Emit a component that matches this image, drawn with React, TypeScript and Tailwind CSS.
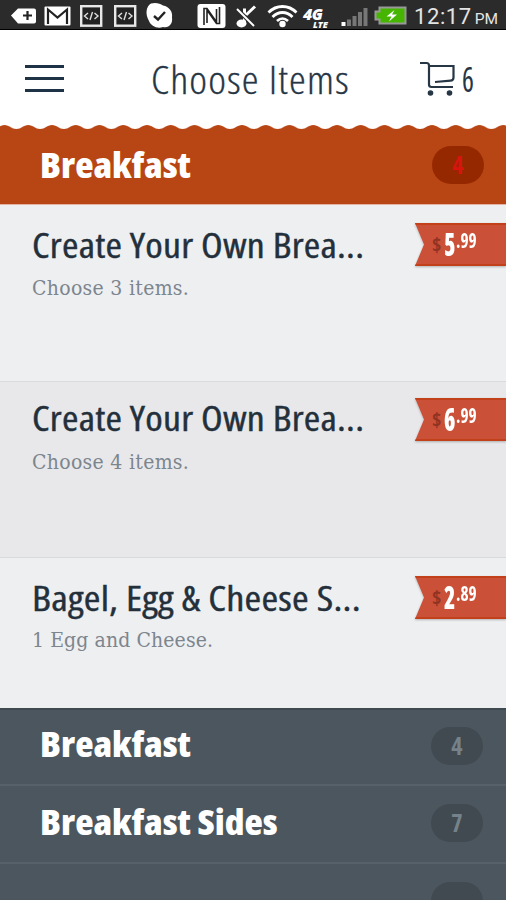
import { clsx } from 'clsx';

type Item = {
  title: string;
  note: string;
  dollars: string;
  cents: string;
  row: string;
  tag: string;
  titleStyle: string;
  noteStyle: string;
};

const items: Item[] = [
  {
    title: 'Create Your Own Brea...',
    note: 'Choose 3 items.',
    dollars: '5',
    cents: '.99',
    row: 'h-[176px] bg-[#eeeff1] pt-[22px]',
    tag: 'mt-[-4px]',
    titleStyle: 'scale-x-[1.137]',
    noteStyle: 'mt-[16px] tracking-[0.300px]',
  },
  {
    title: 'Create Your Own Brea...',
    note: 'Choose 4 items.',
    dollars: '6',
    cents: '.99',
    row: 'h-[176px] bg-[#e8e8ea] pt-[18px] border-t border-[#d9dadc]',
    tag: 'mt-[-2px]',
    titleStyle: 'scale-x-[1.137]',
    noteStyle: 'mt-[17px] tracking-[0.300px]',
  },
  {
    title: 'Bagel, Egg & Cheese S...',
    note: '1 Egg and Cheese.',
    dollars: '2',
    cents: '.89',
    row: 'h-[151px] bg-[#eeeff1] pt-[22px] border-t border-[#d9dadc]',
    tag: 'mt-[-4px]',
    titleStyle: 'scale-x-[1.150]',
    noteStyle: 'mt-[15px] tracking-[0.100px]',
  },
];

function StatusBar() {
  return (
    <div className="flex h-[30px] shrink-0 items-center bg-[#2b2b2b] border-b border-black">
      <svg width="506" height="30" viewBox="0 0 506 30" fill="#fff">
        {/* back tag */}
        <path d="M11 15.5 18 8.5h16a2 2 0 0 1 2 2v11a2 2 0 0 1-2 2H18z" />
        <path d="M27.5 11v9M23 15.5h9" stroke="#222" strokeWidth="2.2" />
        {/* mail */}
        <rect x="44.500" y="6.500" width="26" height="19" rx="1" />
        <path d="M48 24V9.500l9.500 8 9.500-8V24" fill="none" stroke="#222" strokeWidth="2.200" />
        {/* code boxes */}
        {[80, 114].map((x) => (
          <g key={x}>
            <rect x={x + 1.2} y="6.200" width="20" height="19.500" fill="#222" stroke="#e8e8e8" strokeWidth="2.400" />
            <path
              d={`M${x + 8} 13l-3.500 3 3.500 3M${x + 14.500} 13l3.500 3-3.500 3M${x + 12.500} 12l-2.500 8`}
              fill="none"
              stroke="#ddd"
              strokeWidth="1.400"
            />
          </g>
        ))}
        {/* check badge */}
        <path d="M151 3.500c5-1.500 9 0 12 2 6 1 10 6 9 12 1 6-3 11-9 9.500-6 2-12-1-14-6-4-7-3-14.500 2-17.500z" />
        <path d="m154 16 4 3.500 7-7.500" fill="none" stroke="#222" strokeWidth="2.400" />
        {/* nfc */}
        <rect x="197.500" y="4" width="28" height="24" rx="3" />
        <path d="M204 25V8.500h3l9.500 13.500V9M219.500 7v16.500h-3L207 10v13" fill="none" stroke="#222" strokeWidth="1.600" />
        {/* muted note */}
        <ellipse cx="241.500" cy="23.500" rx="5" ry="3.900" />
        <path d="M244.500 23V8.500M246 15l9-8.500" fill="none" stroke="#fff" strokeWidth="3" />
        <path d="m237 9 17 17" stroke="#2b2b2b" strokeWidth="4" />
        <path d="m237 9 17 17" stroke="#fff" strokeWidth="2" />
        {/* wifi */}
        <g fill="none" stroke="#fff" strokeWidth="2.800">
          <path d="M268.500 12.500c8-8 20-8 28 0" />
          <path d="M272.500 17c6-6 14-6 20 0" />
          <path d="M277 21c4-3.500 7-3.500 11 0" />
        </g>
        <circle cx="282.500" cy="24" r="3.200" />
        {/* signal */}
        <rect x="341.500" y="22" width="4" height="4" />
        <g fill="#777">
          <rect x="347" y="19.500" width="4" height="6.500" />
          <rect x="352.500" y="16" width="4" height="10" />
          <rect x="358" y="12" width="4" height="14" />
          <rect x="363.500" y="8" width="4" height="18" />
        </g>
        {/* battery */}
        <path d="M379.500 7.500h26v16h-26v-4h-4v-8h4z" fill="#45b500" stroke="#999" strokeWidth="2" />
        <path d="m394.500 10-8 6.500h5l-2.500 5 8-7h-5z" />
      </svg>
      <div className="absolute left-[303px] top-[8px] text-[16px] leading-[12px] tracking-[-0.5px] font-extrabold italic text-white">
        4G
      </div>
      <div className="absolute left-[313px] top-[21px] text-[9px] leading-[7px] font-extrabold italic text-white">
        LTE
      </div>
      <div className="absolute left-[414px] top-[6px] whitespace-nowrap text-[#e4e4e4] leading-none font-['Roboto',sans-serif]">
        <span className="text-[22px] tracking-[0.6px]">12:17</span>
        <span className="ml-[3px] text-[15.500px]">PM</span>
      </div>
    </div>
  );
}

function Header() {
  return (
    <header className="flex h-[95px] shrink-0 items-start bg-white text-[#263645]">
      <div className="ml-[25px] mt-[35px] flex w-[39px] flex-col gap-[9.500px]">
        <span className="h-[2.500px] bg-[#1e3345]" />
        <span className="h-[2.500px] bg-[#1e3345]" />
        <span className="h-[2.500px] bg-[#1e3345]" />
      </div>
      <h1 className="ml-[87px] mt-[30px] w-[200px] origin-left scale-x-[1.115] whitespace-nowrap text-[38px] font-light leading-none tracking-[1px] [font-stretch:75%] [-webkit-text-stroke:0.3px]">
        Choose Items
      </h1>
      <svg className="ml-[69px] mt-[31px]" width="36" height="36" viewBox="0 0 36 36" fill="none" stroke="#263645" strokeWidth="2.200">
        <path d="M0 2h6.500q2.500 0 2.500 2.500v19q0 2.500 2.500 2.500H33" />
        <path d="M9 5h24.500v11.500q0 3-3 3.200L15 21" />
        <circle cx="10.500" cy="32" r="2.800" fill="#263645" stroke="none" />
        <circle cx="29.500" cy="32" r="2.800" fill="#263645" stroke="none" />
      </svg>
      <span className="ml-[6px] mt-[31px] origin-left scale-x-[0.8] text-[35px] leading-none [font-stretch:75%]">6</span>
    </header>
  );
}

function Heading({ children }: { children: string }) {
  return (
    <h2 className="origin-left scale-x-[1.048] whitespace-nowrap text-[36px] font-extrabold leading-none text-white [font-stretch:75%]">
      {children}
    </h2>
  );
}

function Count({ children, active }: { children?: string; active?: boolean }) {
  return (
    <span
      className={clsx(
        'flex h-[38px] w-[52px] shrink-0 items-center justify-center rounded-full text-[24px] font-bold leading-none [font-stretch:75%]',
        active ? 'bg-[#962800] text-[#d8140c]' : 'bg-[#414a50] text-[#76828a]',
      )}
    >
      {children}
    </span>
  );
}

function Price({ dollars, cents, className }: { dollars: string; cents: string; className: string }) {
  return (
    <div className={clsx('h-[43px] w-[91px] shrink-0 drop-shadow-[0_1px_1px_rgba(0,0,0,0.25)]', className)}>
      <div className="flex h-full items-start border-y-2 border-[#c2401a] bg-[#cb5038] pl-[17px] font-bold leading-none text-white [clip-path:polygon(0_0,100%_0,100%_100%,0_100%,9px_50%)] [font-stretch:75%]">
        <span className="mt-[10px] w-[12px] text-[20px] text-[#8f3322]">$</span>
        <span className="mt-[3px] w-[12px] origin-left scale-x-[0.72] text-[32px] font-extrabold">{dollars}</span>
        <span className="mt-[5px] origin-left scale-x-[0.82] text-[21px]">{cents}</span>
      </div>
    </div>
  );
}

export default function App() {
  return (
    <div className="relative flex h-[900px] w-[506px] flex-col overflow-hidden bg-[#4c565e] font-['Open_Sans',sans-serif]">
      <StatusBar />
      <Header />

      {/* scalloped edge over the open category */}
      <svg className="shrink-0 bg-white" width="506" height="5" viewBox="0 0 506 5">
        <defs>
          <pattern id="scallop" x="-7.400" width="23.750" height="5" patternUnits="userSpaceOnUse">
            <path d="M0 5V4C5 4 7 0 11.900 0S19 4 23.750 4V5z" fill="#b84614" />
          </pattern>
        </defs>
        <rect width="506" height="5" fill="url(#scallop)" />
      </svg>
      <section className="flex h-[75px] shrink-0 items-start justify-between border-b border-[#e2b3a4] bg-[#b84614] pl-[40px] pr-[22px] pt-[16px]">
        <div className="mt-px">
          <Heading>Breakfast</Heading>
        </div>
        <Count active>4</Count>
      </section>

      {items.map((item, i) => (
        <article key={i} className={clsx('flex shrink-0 items-start justify-between pl-[32px]', item.row)}>
          <div className="whitespace-nowrap">
            <h3
              className={clsx(
                'w-fit origin-left text-[35px] font-medium leading-none tracking-[0.200px] text-[#23303b] [font-stretch:75%] [-webkit-text-stroke:0.4px]',
                item.titleStyle,
              )}
            >
              {item.title}
            </h3>
            <p
              className={clsx(
                "text-[21px] leading-none text-[#7d858e] font-['DejaVu_Serif',serif] [font-stretch:75%]",
                item.noteStyle,
              )}
            >
              {item.note}
            </p>
          </div>
          <Price dollars={item.dollars} cents={item.cents} className={item.tag} />
        </article>
      ))}

      <section className="flex h-[78px] shrink-0 items-start justify-between border-b-2 border-t-2 border-b-[#56616a] border-t-[#3f4a50] pl-[40px] pr-[23px] pt-[17px]">
        <div className="-mt-px">
          <Heading>Breakfast</Heading>
        </div>
        <Count>4</Count>
      </section>
      <section className="flex h-[78px] shrink-0 items-start justify-between border-b-2 border-[#56616a] pl-[40px] pr-[23px] pt-[18px]">
        <Heading>Breakfast Sides</Heading>
        <Count>7</Count>
      </section>
      <section className="flex shrink-0 justify-end pr-[23px] pt-[18px]">
        <Count />
      </section>
    </div>
  );
}
